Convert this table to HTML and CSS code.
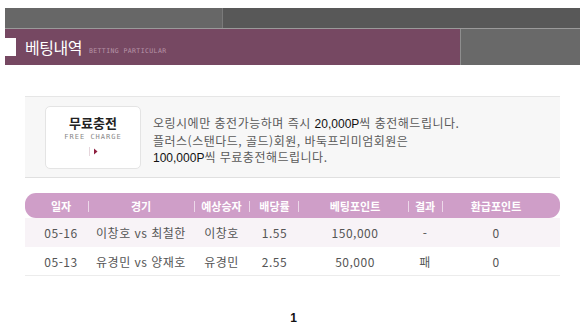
FILE: index.html
```html
<!DOCTYPE html>
<html lang="ko">
<head>
<meta charset="utf-8">
<title>베팅내역</title>
<link rel="stylesheet" href="styles.css">
</head>
<body>
<div class="top">
  <div class="topbar"><div class="tb-left"></div><div class="tb-right"></div></div>
  <div class="band">
    <div class="band-main">
      <span class="mark"></span>
      <span class="title">베팅내역</span>
      <span class="sub">BETTING PARTICULAR</span>
    </div>
    <div class="band-side"></div>
  </div>
</div>

<div class="content">
  <div class="charge">
    <div class="card">
      <div class="card-title">무료충전</div>
      <div class="card-sub">FREE CHARGE</div>
      <div class="card-icon">
        <svg width="10" height="9" viewBox="0 0 10 9"><rect x="0" y="0" width="1" height="9" fill="#e6d6dc"/><path d="M5 1.5 L8.5 4.5 L5 7.5 Z" fill="#8e1f3f"/></svg>
      </div>
    </div>
    <div class="charge-text">
      <p>오링시에만 충전가능하며 즉시 <b>20,000P</b>씩 충전해드립니다.</p>
      <p>플러스(스탠다드, 골드)회원, 바둑프리미엄회원은</p>
      <p><b>100,000P</b>씩 무료충전해드립니다.</p>
    </div>
  </div>

  <div class="table">
    <div class="row head">
      <div class="c c1">일자</div>
      <div class="c c2 sep">경기</div>
      <div class="c c3 sep">예상승자</div>
      <div class="c c4 sep">배당률</div>
      <div class="c c5 sep">베팅포인트</div>
      <div class="c c6 sep">결과</div>
      <div class="c c7 sep">환급포인트</div>
    </div>
    <div class="row odd">
      <div class="c c1">05-16</div>
      <div class="c c2">이창호 vs 최철한</div>
      <div class="c c3">이창호</div>
      <div class="c c4">1.55</div>
      <div class="c c5">150,000</div>
      <div class="c c6">-</div>
      <div class="c c7">0</div>
    </div>
    <div class="row even">
      <div class="c c1">05-13</div>
      <div class="c c2">유경민 vs 양재호</div>
      <div class="c c3">유경민</div>
      <div class="c c4">2.55</div>
      <div class="c c5">50,000</div>
      <div class="c c6">패</div>
      <div class="c c7">0</div>
    </div>
  </div>

  <div class="pager"><span class="page">1</span></div>
</div>
</body>
</html>
```
FILE: styles.css
```css
html, body {
  margin: 0;
  padding: 0;
  background: #ffffff;
}
body {
  font-family: "Noto Sans CJK KR", "Liberation Sans", sans-serif;
  font-size: 12px;
  color: #555;
  width: 584px;
  height: 326px;
  overflow: hidden;
}

.top {
  margin: 8px 4px 0 5px;
}
.topbar {
  display: flex;
  height: 20px;
  border-bottom: 1px solid #9a9a9a;
}
.tb-left {
  width: 217px;
  background: #676767;
  border-right: 1px solid #7a7a7a;
}
.tb-right {
  flex: 1;
  background: #585858;
}

.band {
  display: flex;
  height: 36px;
}
.band-main {
  width: 455px;
  background: #764862;
  display: flex;
  align-items: center;
}
.band-side {
  flex: 1;
  background: #696969;
  border-left: 1px solid #8e8e8e;
}
.mark {
  width: 11px;
  height: 18px;
  background: #ffffff;
  margin-right: 9px;
}
.title {
  color: #ffffff;
  font-size: 16px;
  letter-spacing: -0.5px;
  line-height: 18px;
}
.sub {
  color: #b795a8;
  font-family: "DejaVu Sans Mono", "Liberation Mono", monospace;
  font-size: 6.5px;
  letter-spacing: 0.4px;
  margin-left: 7px;
  margin-top: 8px;
}

.content {
  margin: 31px 24px 0 25px;
}

.charge {
  display: flex;
  align-items: center;
  height: 80px;
  background: #f7f7f7;
  border-top: 1px solid #e6e6e6;
  border-bottom: 1px solid #e0e0e0;
  padding-left: 20px;
}
.card {
  width: 94px;
  height: 61px;
  background: #ffffff;
  border: 1px solid #e4e4e4;
  border-radius: 5px;
  display: flex;
  flex-direction: column;
  align-items: center;
}
.card-title {
  margin-top: 8px;
  font-size: 13px;
  font-weight: bold;
  color: #222;
  line-height: 16px;
}
.card-sub {
  margin-top: 2px;
  font-family: "DejaVu Sans Mono", "Liberation Mono", monospace;
  font-size: 7px;
  letter-spacing: 1px;
  color: #888;
  line-height: 9px;
}
.card-icon {
  margin-top: 5px;
  margin-left: 2px;
  line-height: 0;
}
.charge-text {
  margin-left: 12px;
  margin-top: 8px;
}
.charge-text p {
  margin: 0;
  line-height: 16.5px;
  font-size: 12px;
  letter-spacing: 0.5px;
  color: #5a5a5a;
}
.charge-text b {
  font-weight: normal;
  letter-spacing: 0;
  color: #111;
  font-family: "Liberation Sans", "Noto Sans CJK KR", sans-serif;
}

.table {
  margin-top: 15px;
}
.row {
  display: grid;
  grid-template-columns: 63px 106px 55px 49px 110px 34px 118px;
  align-items: center;
}
.head {
  height: 25px;
  background: #cf9ec8;
  border-radius: 11px;
  color: #ffffff;
  font-weight: bold;
  font-size: 11px;
}
.odd {
  height: 29px;
  background: #f8f3f7;
  letter-spacing: 0.5px;
}
.even {
  height: 28px;
  background: #ffffff;
  border-bottom: 1px solid #ececec;
  letter-spacing: 0.5px;
}
.c {
  text-align: center;
  white-space: nowrap;
  position: relative;
}
.c1 { padding-left: 9px; }
.c4 { padding-left: 2px; }
.c5 { padding-left: 4px; }
.c7 { padding-right: 10px; }
.sep::before {
  content: "";
  position: absolute;
  left: 0;
  top: 50%;
  width: 1px;
  height: 11px;
  margin-top: -5px;
  background: rgba(255, 255, 255, 0.6);
}

.pager {
  display: flex;
  justify-content: center;
  margin-top: 35px;
}
.page {
  font-family: "Liberation Sans", sans-serif;
  font-weight: bold;
  font-size: 12px;
  color: #111;
  margin-left: 2px;
}
```
